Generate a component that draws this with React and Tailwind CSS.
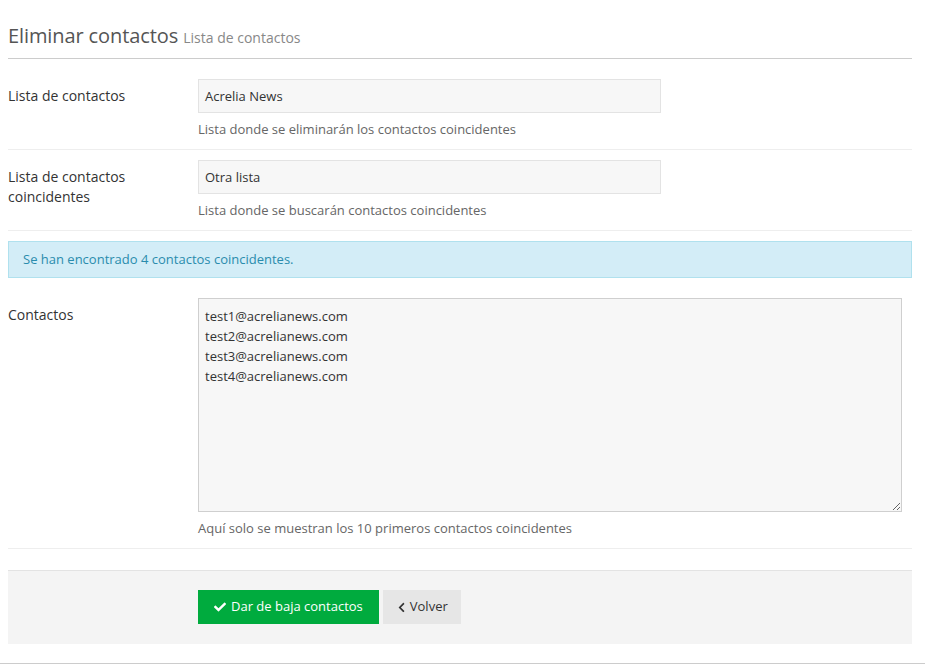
import React from 'react'
import { FaCheck, FaChevronLeft } from 'react-icons/fa'

const emails = [
  'test1@acrelianews.com',
  'test2@acrelianews.com',
  'test3@acrelianews.com',
  'test4@acrelianews.com',
]

const Row = ({ label, children }) => (
  <div className='flex border-b border-[#eeeeee] pt-[10px] pb-[10px]'>
    <label className='w-[190px] shrink-0 pt-[7px] text-[14px] leading-5 text-[#333]'>{label}</label>
    <div className='flex-1'>{children}</div>
  </div>
)

const App = () => {
  return (
    <div className='min-h-[665px] bg-white font-["Open_Sans",sans-serif] text-[13px] text-[#333]'>
      <div className='pl-2 pr-[13px]'>
        {/* title */}
        <div className='flex h-[59px] items-end border-b border-[#cccccc] pb-[6px]'>
          <h1 className='text-[20px] leading-7 tracking-[-0.1px] text-[#555]'>
            Eliminar contactos <small className='text-[14px] tracking-normal text-[#888]'>Lista de contactos</small>
          </h1>
        </div>

        <div className='mt-[10px]'>
          <Row label='Lista de contactos'>
            <div className='flex h-[34px] w-[463px] items-center border border-[#e3e3e3] bg-[#f7f7f7] px-[6px] pt-[2px] text-[#333]'>Acrelia News</div>
            <p className='mt-[6px] leading-5 text-[#666]'>Lista donde se eliminarán los contactos coincidentes</p>
          </Row>
          <Row label={<>Lista de contactos<br />coincidentes</>}>
            <div className='flex h-[34px] w-[463px] items-center border border-[#e3e3e3] bg-[#f7f7f7] px-[6px] pt-[2px] text-[#333]'>Otra lista</div>
            <p className='mt-[6px] leading-5 text-[#666]'>Lista donde se buscarán contactos coincidentes</p>
          </Row>
        </div>

        {/* alert */}
        <div className='mt-[10px] flex h-[37px] items-center border border-[#b0e1ee] bg-[#d3edf7] px-[14px] text-[#2a8cad]'>
          Se han encontrado 4 contactos coincidentes.
        </div>

        <div className='mt-[10px]'>
          <Row label='Contactos'>
            <textarea
              readOnly
              defaultValue={emails.join('\n')}
              className='block h-[214px] w-[704px] resize border border-[#cfcfcf] bg-[#f7f7f7] px-[6px] pt-[7px] pb-[6px] leading-5 text-[#333] outline-none'
            />
            <p className='mt-[6px] leading-5 text-[#666]'>Aquí solo se muestran los 10 primeros contactos coincidentes</p>
          </Row>
        </div>

        {/* actions */}
        <div className='mt-[21px] flex border-t border-[#e3e3e3] bg-[#f4f4f4] pt-[19px] pb-[20px] pl-[190px]'>
          <button className='flex h-[34px] items-center gap-[5px] bg-[#00ab3e] px-[16px] text-[13px] text-white'>
            <FaCheck className='text-[12px]' /> Dar de baja contactos
          </button>
          <button className='ml-[4px] flex h-[34px] items-center gap-[3px] bg-[#e6e6e6] px-[13px] text-[13px] text-[#333]'>
            <FaChevronLeft className='text-[11px]' />Volver
          </button>
        </div>
      </div>
      <div className='mt-[19px] border-b border-[#cccccc]' />
    </div>
  )
}

export default App
